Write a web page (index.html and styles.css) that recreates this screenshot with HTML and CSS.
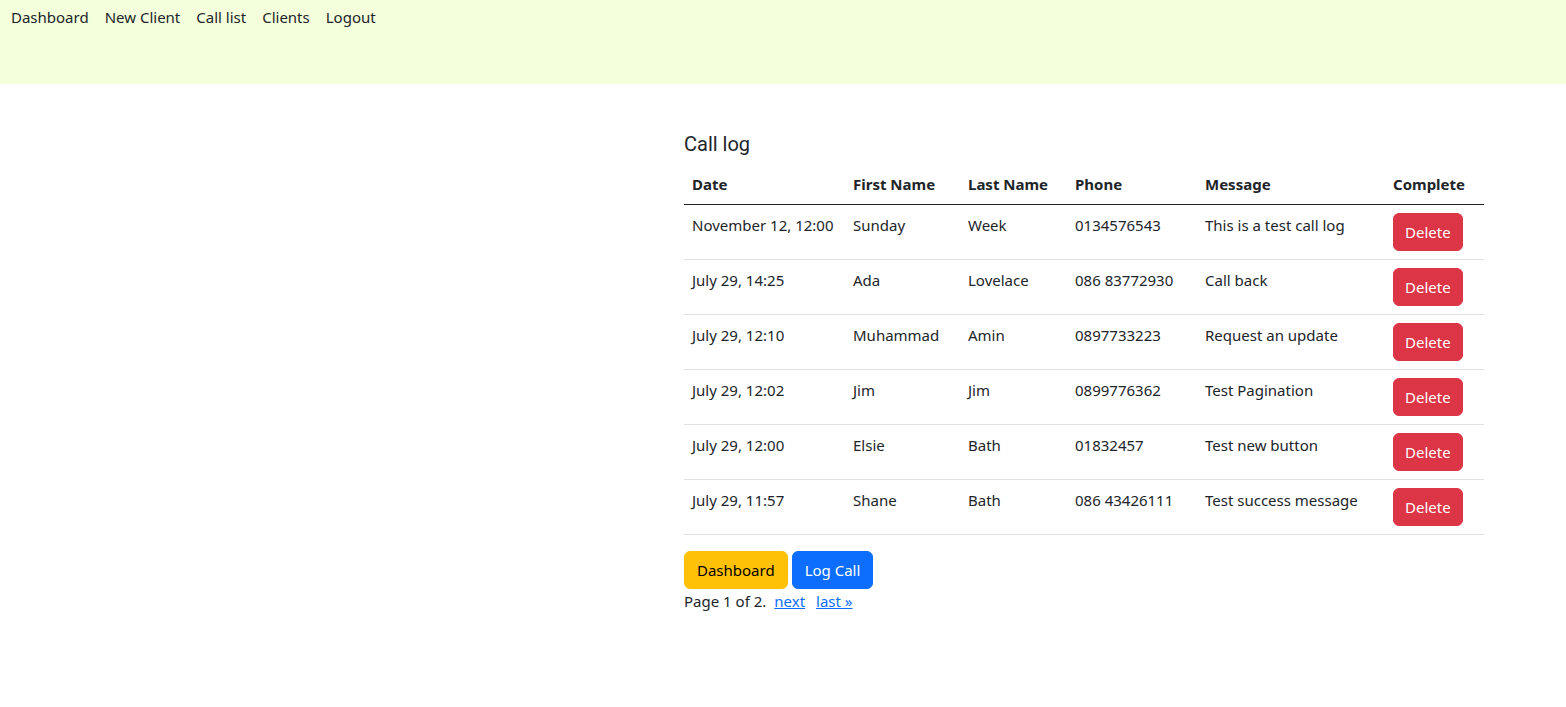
FILE: index.html
```html
<!DOCTYPE html>
<html lang="en">
<head>
<meta charset="utf-8">
<title>Call log</title>
<link rel="stylesheet" href="styles.css">
</head>
<body>
<nav class="topbar">
  <a class="nav-link" href="#">Dashboard</a>
  <a class="nav-link" href="#">New Client</a>
  <a class="nav-link" href="#">Call list</a>
  <a class="nav-link" href="#">Clients</a>
  <a class="nav-link" href="#">Logout</a>
</nav>
<main class="page">
  <section class="panel">
    <h5 class="title">Call log</h5>
    <table class="log">
      <colgroup>
        <col class="c-date"><col class="c-first"><col class="c-last"><col class="c-phone"><col class="c-msg"><col class="c-done">
      </colgroup>
      <thead>
        <tr><th>Date</th><th>First Name</th><th>Last Name</th><th>Phone</th><th>Message</th><th>Complete</th></tr>
      </thead>
      <tbody>
        <tr><td>November 12, 12:00</td><td>Sunday</td><td>Week</td><td>0134576543</td><td>This is a test call log</td><td><button class="btn btn-danger">Delete</button></td></tr>
        <tr><td>July 29, 14:25</td><td>Ada</td><td>Lovelace</td><td>086 83772930</td><td>Call back</td><td><button class="btn btn-danger">Delete</button></td></tr>
        <tr><td>July 29, 12:10</td><td>Muhammad</td><td>Amin</td><td>0897733223</td><td>Request an update</td><td><button class="btn btn-danger">Delete</button></td></tr>
        <tr><td>July 29, 12:02</td><td>Jim</td><td>Jim</td><td>0899776362</td><td>Test Pagination</td><td><button class="btn btn-danger">Delete</button></td></tr>
        <tr><td>July 29, 12:00</td><td>Elsie</td><td>Bath</td><td>01832457</td><td>Test new button</td><td><button class="btn btn-danger">Delete</button></td></tr>
        <tr><td>July 29, 11:57</td><td>Shane</td><td>Bath</td><td>086 43426111</td><td>Test success message</td><td><button class="btn btn-danger">Delete</button></td></tr>
      </tbody>
    </table>
    <div class="actions">
      <a class="btn btn-warning" href="#">Dashboard</a>
      <a class="btn btn-primary" href="#">Log Call</a>
    </div>
    <div class="pager">
      <span class="current">Page 1 of 2.</span>
      <a class="next" href="#">next</a>
      <a class="last" href="#">last &raquo;</a>
    </div>
  </section>
</main>
</body>
</html>
```
FILE: styles.css
```css
* { box-sizing: border-box; }
html, body { margin: 0; padding: 0; }
body {
  font-family: "Noto Sans", "Open Sans", "Liberation Sans", sans-serif;
  font-size: 15px;
  line-height: 24px;
  color: #212529;
  background: #fff;
}
.topbar {
  background: #f4ffdc;
  height: 84px;
  display: flex;
  align-items: flex-start;
  gap: 16px;
  padding: 5px 0 0 11px;
}
.nav-link {
  color: #212529;
  text-decoration: none;
  line-height: 24px;
}
.page {
  padding: 48px 0 0 684px;
}
.panel { width: 800px; }
.title {
  margin: 0 0 8px;
  font-family: Roboto, "Liberation Sans", sans-serif;
  font-size: 20px;
  font-weight: 400;
  line-height: 24px;
}
.log {
  width: 800px;
  border-collapse: collapse;
  margin-bottom: 16px;
  table-layout: fixed;
}
.c-date { width: 161px; }
.c-first { width: 115px; }
.c-last { width: 107px; }
.c-phone { width: 130px; }
.c-msg { width: 188px; }
.c-done { width: 99px; }
.log th, .log td {
  text-align: left;
  vertical-align: top;
  padding: 8px;
  white-space: nowrap;
}
.log th {
  font-weight: 700;
  border-bottom: 1px solid #212529;
}
.log td { border-bottom: 1px solid #dee2e6; }
.btn {
  display: inline-block;
  font-family: inherit;
  font-size: 15px;
  line-height: 24px;
  padding: 6px 12px;
  border: 1px solid transparent;
  border-radius: 6px;
  text-decoration: none;
  cursor: pointer;
}
.btn-danger { background: #dc3545; color: #fff; border-color: #dc3545; padding: 6px 11px; }
.btn-warning { background: #ffc107; color: #000; border-color: #ffc107; padding: 6px 12px; }
.btn-primary { background: #0d6efd; color: #fff; border-color: #0d6efd; }
.actions { display: flex; gap: 4px; }
.pager { display: flex; line-height: 24px; }
.pager a { color: #0d6efd; text-decoration: underline; }
.pager .next { margin-left: 8px; }
.pager .last { margin-left: 11px; }
```
